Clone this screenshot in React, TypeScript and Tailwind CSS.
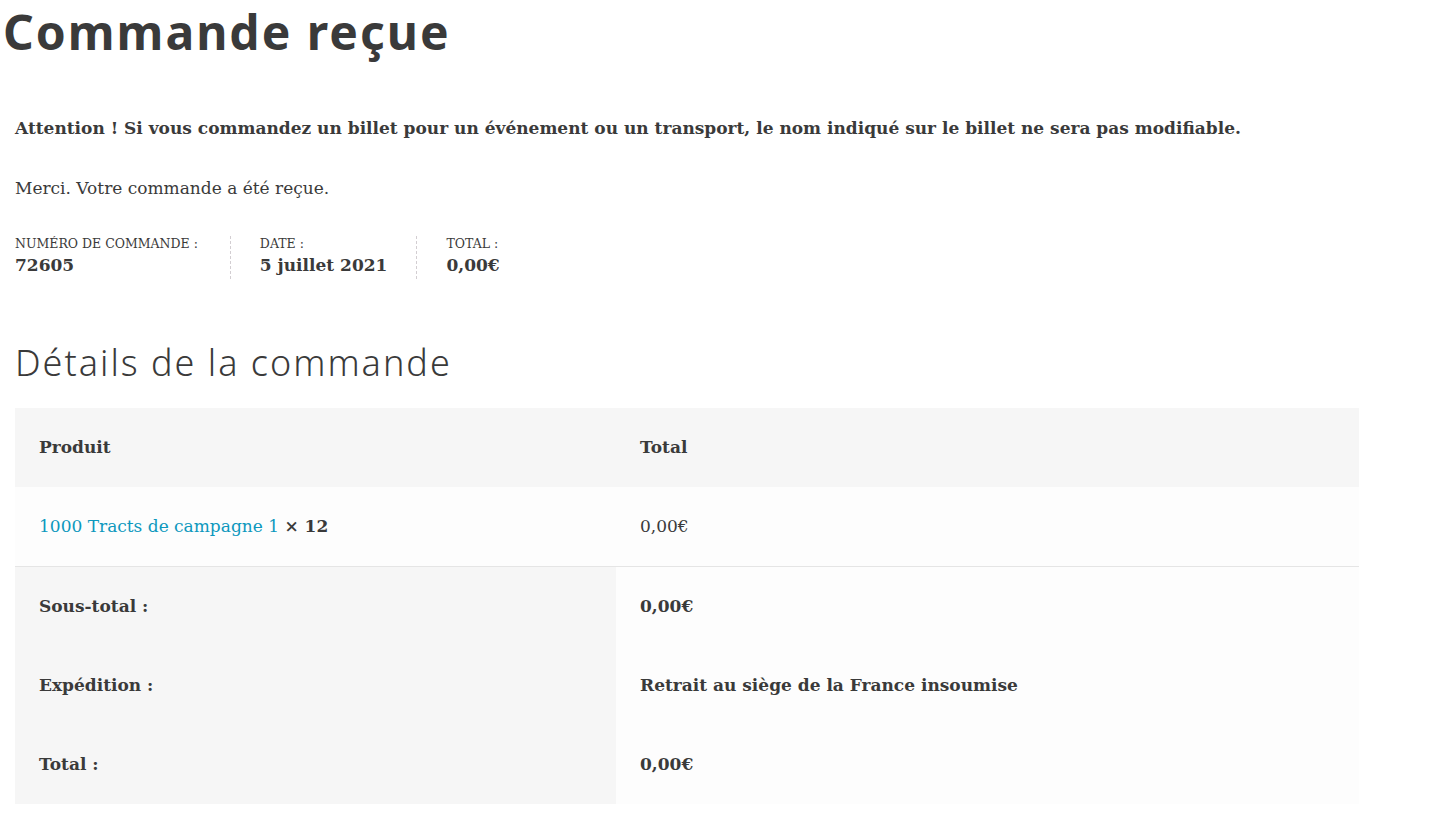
import React from 'react'

const body = { fontFamily: '"DejaVu Serif", "Liberation Serif", serif' }
const head = { fontFamily: '"Noto Sans", Inter, sans-serif' }

type Meta = { label: string; value: string }

const metas: Meta[] = [
    { label: "Numéro de commande :", value: "72605" },
    { label: "Date :", value: "5 juillet 2021" },
    { label: "Total :", value: "0,00€" },
]

export default function App() {
    return (
        <div className="min-h-[824px] bg-white text-[#3a3a3a]" style={body}>
            <h1 className="pl-[3px] pt-[3px] text-[48px] font-bold leading-[58px] tracking-[2px] text-[#3a3a3a]" style={head}>Commande reçue</h1>

            <div className="px-[15px]">
                <p className="mt-[54px] text-[17px] font-bold leading-[27px]">
                    Attention ! Si vous commandez un billet pour un événement ou un transport, le nom indiqué sur le billet ne sera pas modifiable.
                </p>
                <p className="mt-[33px] text-[17px] leading-[27px]">Merci. Votre commande a été reçue.</p>

                <ul className="mt-[34px] flex">
                    {metas.map((m, i) => (
                        <li key={m.label} className={`flex flex-col ${i === 0 ? "pr-[32px]" : "pr-[29px]"} ${i < metas.length - 1 ? "mr-[29px] border-r border-dashed border-[#d3ced2]" : ""}`}>
                            <span className="text-[12.5px] uppercase leading-[16px]">{m.label}</span>
                            <strong className="text-[17px] font-bold leading-[27px]">{m.value}</strong>
                        </li>
                    ))}
                </ul>

                <h2 className="mt-[61px] text-[36px] font-light leading-[46px] tracking-[2px]" style={head}>Détails de la commande</h2>

                <table className="mt-[22px] w-[1344px] border-collapse text-[17px] leading-[31px]">
                    <thead>
                        <tr className="bg-[#f6f6f6]">
                            <th className="w-[601px] px-[24px] py-[24px] text-left font-bold">Produit</th>
                            <th className="px-[24px] py-[24px] text-left font-bold">Total</th>
                        </tr>
                    </thead>
                    <tbody>
                        <tr className="border-b border-[#e5e5e5] bg-[#fdfdfd]">
                            <td className="px-[24px] py-[24px]">
                                <a className="text-[#0d98bd]" href="#">1000 Tracts de campagne 1</a> <strong className="font-bold">× 12</strong>
                            </td>
                            <td className="px-[24px] py-[24px]">0,00€</td>
                        </tr>
                    </tbody>
                    <tfoot>
                        {[
                            ["Sous-total :", "0,00€"],
                            ["Expédition :", "Retrait au siège de la France insoumise"],
                            ["Total :", "0,00€"],
                        ].map(([k, v]) => (
                            <tr key={k}>
                                <th className="bg-[#f6f6f6] px-[24px] py-[24px] text-left font-bold">{k}</th>
                                <td className="bg-[#fdfdfd] px-[24px] py-[24px] font-bold">{v}</td>
                            </tr>
                        ))}
                    </tfoot>
                </table>
            </div>
        </div>
    )
}
